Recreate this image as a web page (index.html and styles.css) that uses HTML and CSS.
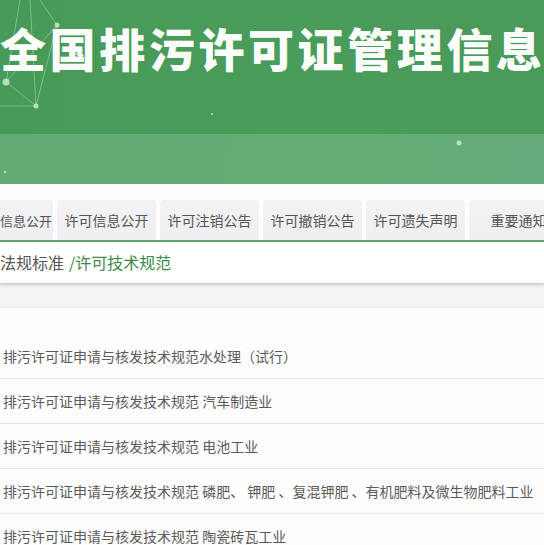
FILE: index.html
```html
<!DOCTYPE html>
<html lang="zh-CN">
<head>
<meta charset="utf-8">
<title>全国排污许可证管理信息平台</title>
<link rel="stylesheet" href="styles.css">
</head>
<body>
<header class="banner">
  <div class="banner-main">
    <svg class="network" width="544" height="184" viewBox="0 0 544 184">
      <g stroke="rgba(190,235,200,0.55)" stroke-width="0.8" fill="none">
        <line x1="40" y1="0" x2="57" y2="25"/>
        <line x1="57" y1="25" x2="36" y2="106"/>
        <line x1="6" y1="82" x2="36" y2="106"/>
        <line x1="6" y1="82" x2="57" y2="25"/>
        <line x1="20" y1="0" x2="6" y2="82"/>
        <line x1="0" y1="106" x2="36" y2="106"/>
        <line x1="36" y1="106" x2="30" y2="0"/>
      </g>
      <g fill="rgba(200,240,210,0.8)">
        <circle cx="57" cy="25" r="2.5"/>
        <circle cx="6" cy="82" r="3.5"/>
        <circle cx="36" cy="106" r="2.5"/>
        <circle cx="212" cy="114" r="1"/>
        <circle cx="459" cy="143" r="2.5"/>
        <circle cx="5" cy="172" r="1.2"/>
      </g>
    </svg>
    <h1 class="title">全国排污许可证管理信息</h1>
  </div>
  <div class="banner-sub"></div>
</header>

<nav class="tabs">
  <a class="tab tab-first">信息公开</a>
  <a class="tab">许可信息公开</a>
  <a class="tab">许可注销公告</a>
  <a class="tab">许可撤销公告</a>
  <a class="tab">许可遗失声明</a>
  <a class="tab">重要通知</a>
</nav>

<div class="crumbs">
  <span class="crumb">法规标准</span>
  <span class="crumb-current">/许可技术规范</span>
</div>

<div class="gap"></div>

<ul class="doc-list">
  <li class="doc">排污许可证申请与核发技术规范水处理（试行）</li>
  <li class="doc">排污许可证申请与核发技术规范 汽车制造业</li>
  <li class="doc">排污许可证申请与核发技术规范 电池工业</li>
  <li class="doc">排污许可证申请与核发技术规范 磷肥、 钾肥 、复混钾肥 、有机肥料及微生物肥料工业</li>
  <li class="doc">排污许可证申请与核发技术规范 陶瓷砖瓦工业</li>
</ul>
</body>
</html>
```

FILE: styles.css
```css
* {
  box-sizing: border-box;
}

html, body {
  margin: 0;
  padding: 0;
  overflow: hidden;
}

body {
  width: 544px;
  background: #fdfdfd;
  font-family: "Noto Sans CJK SC", "Noto Sans", sans-serif;
  color: #555;
}

/* top banner */
.banner {
  position: relative;
}

.banner-main {
  height: 134px;
  background: linear-gradient(90deg, #489a58 0%, #4a9c5a 60%, #4a9a59 100%);
  display: flex;
  align-items: flex-start;
}

.network {
  position: absolute;
  left: 0;
  top: 0;
}

.title {
  position: relative;
  margin: 17px 0 0 0;
  font-size: 46px;
  font-weight: 900;
  letter-spacing: 3.6px;
  line-height: 60px;
  color: #fbfdfb;
  white-space: nowrap;
}

.banner-sub {
  height: 50px;
  background: linear-gradient(100deg, #62ab74 0%, #63ad75 70%, #65aa7a 100%);
}

/* tab strip */
.tabs {
  display: flex;
  gap: 4px;
  margin-top: 16px;
  height: 42px;
  border-bottom: 2px solid #5ea56b;
  overflow: hidden;
}

.tab {
  flex: 0 0 99px;
  min-width: 0;
  height: 40px;
  display: flex;
  align-items: center;
  justify-content: center;
  background: linear-gradient(180deg, #f3f2f4 0%, #efeef0 100%);
  border-radius: 4px 4px 0 0;
  font-size: 14px;
  color: #555;
  white-space: nowrap;
}

.tab-first {
  flex-basis: 53px;
  justify-content: flex-end;
  padding-right: 1px;
  font-size: 13px;
  overflow: hidden;
  border-radius: 0 4px 0 0;
}

/* breadcrumb bar */
.crumbs {
  height: 41px;
  display: flex;
  align-items: center;
  gap: 5px;
  padding-bottom: 2px;
  font-size: 16px;
  background: #fff;
  box-shadow: 0 2px 3px rgba(0, 0, 0, 0.18);
  position: relative;
}

.crumb {
  color: #555;
}

.crumb-current {
  color: #3d8a4a;
}

.gap {
  height: 25px;
  background: #f4f3f5;
  border-bottom: 1px solid #eaeaea;
}

/* documents */
.doc-list {
  list-style: none;
  margin: 0;
  padding: 26px 0 0;
  background: #fdfdfd;
}

.doc {
  height: 45px;
  line-height: 44px;
  padding-left: 3px;
  font-size: 14px;
  color: #5a5a5a;
  border-bottom: 1px solid #e4e4e4;
  white-space: nowrap;
}
```
